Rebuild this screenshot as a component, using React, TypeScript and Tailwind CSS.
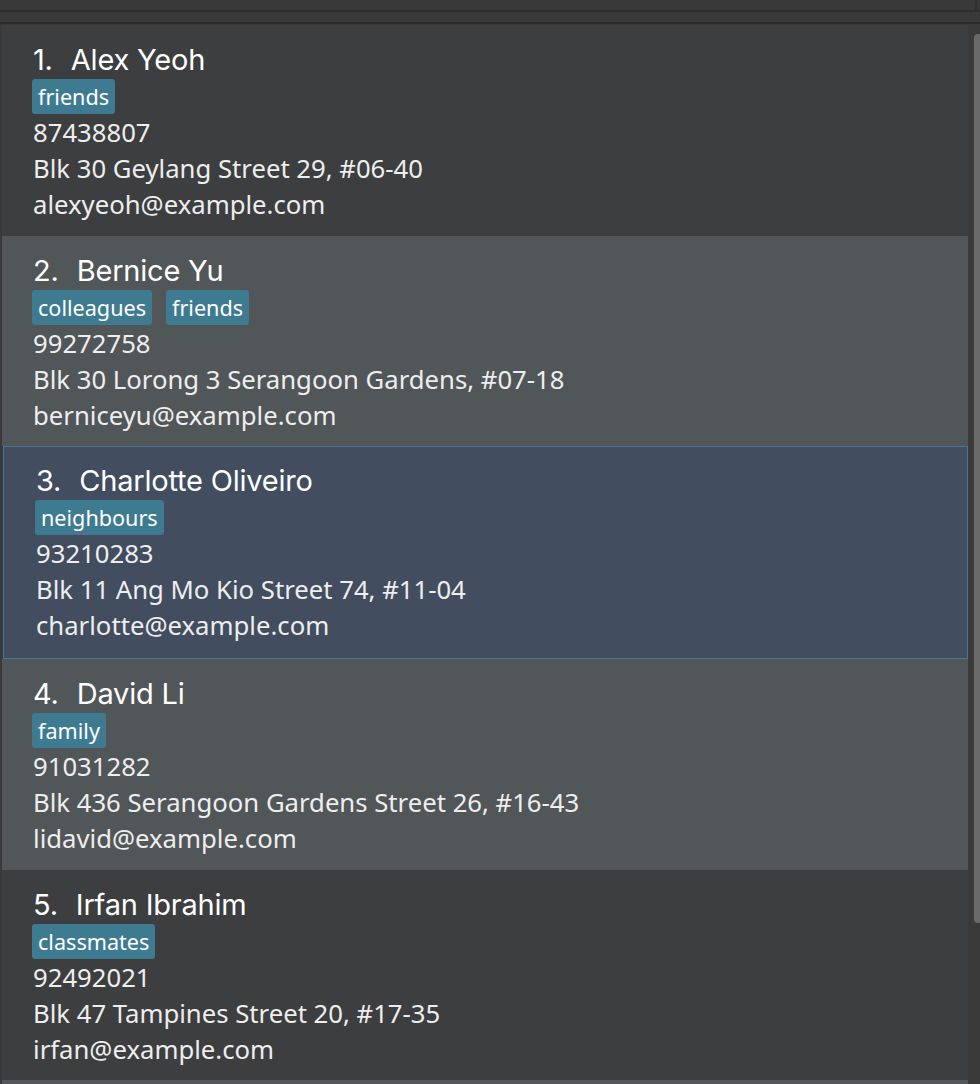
import React from 'react';

type Person = {
  name: string;
  tags: string[];
  phone: string;
  address: string;
  email: string;
};

const people: Person[] = [
  { name: 'Alex Yeoh', tags: ['friends'], phone: '87438807', address: 'Blk 30 Geylang Street 29, #06-40', email: 'alexyeoh@example.com' },
  { name: 'Bernice Yu', tags: ['colleagues', 'friends'], phone: '99272758', address: 'Blk 30 Lorong 3 Serangoon Gardens, #07-18', email: 'berniceyu@example.com' },
  { name: 'Charlotte Oliveiro', tags: ['neighbours'], phone: '93210283', address: 'Blk 11 Ang Mo Kio Street 74, #11-04', email: 'charlotte@example.com' },
  { name: 'David Li', tags: ['family'], phone: '91031282', address: 'Blk 436 Serangoon Gardens Street 26, #16-43', email: 'lidavid@example.com' },
  { name: 'Irfan Ibrahim', tags: ['classmates'], phone: '92492021', address: 'Blk 47 Tampines Street 20, #17-35', email: 'irfan@example.com' },
];

const heights = ['h-[211px]', 'h-[210px]', 'h-[213px]', 'h-[211px]', 'h-[210px]'];

function PersonCard({ person, index, selected }: { person: Person; index: number; selected: boolean }) {
  const bg = selected
    ? 'bg-[#424d5f] border border-[#3e7b91] ml-[1px] pl-[31px] pt-[16px]'
    : index % 2 === 0
      ? 'bg-[#3c3e3f] pl-[30px] pt-[17px]'
      : 'bg-[#515658] pl-[30px] pt-[17px]';
  return (
    <div className={`${heights[index]} ${bg} flex flex-col shrink-0 overflow-hidden`}>
      <div className="flex items-baseline h-[36px] leading-[36px] text-[29px] text-white font-['Inter',sans-serif] tracking-[-0.2px] pl-[1px]">
        <span className="mr-[18px]">{index + 1}.</span>
        <span>{person.name}</span>
      </div>
      <div className="flex gap-[14px] mt-[1px]">
        {person.tags.map((t) => (
          <span
            key={t}
            className="bg-[#3e7b91] rounded-[3px] px-[6px] h-[35px] leading-[35px] text-[21.6px] text-white font-['Noto_Sans',sans-serif]"
          >
            {t}
          </span>
        ))}
      </div>
      <div className="flex flex-col mt-[1px] pl-[1px] text-[25.7px] leading-[36px] text-[#eeeeee] font-['Noto_Sans',sans-serif]">
        <span>{person.phone}</span>
        <span>{person.address}</span>
        <span>{person.email}</span>
      </div>
    </div>
  );
}

export default function App() {
  return (
    <div className="w-[980px] h-[1084px] bg-[#393939] overflow-hidden flex flex-col">
      <div className="h-[10px] shrink-0 border-r-[2px] border-[#2f2f2f] mr-[3px]" />
      <div className="h-[2px] shrink-0 bg-[#2d2d2d]" />
      <div className="h-[10px] shrink-0" />
      <div className="h-[2px] shrink-0 bg-[#2b2b2b]" />
      <div className="h-[1px] shrink-0" />
      <div className="flex flex-1 min-h-0">
        <div className="ml-[2px] w-[966px] flex flex-col">
          {people.map((p, i) => (
            <PersonCard key={p.name} person={p} index={i} selected={i === 2} />
          ))}
          <div className="h-[20px] bg-[#515658] shrink-0" />
        </div>
        <div className="w-[12px] flex pl-[6px] bg-[#3a3a3a]">
          <div className="w-[6px] mt-[9px] h-[889px] bg-[#6a6a6a] rounded-tl-[4px] rounded-bl-[4px]" />
        </div>
      </div>
    </div>
  );
}
